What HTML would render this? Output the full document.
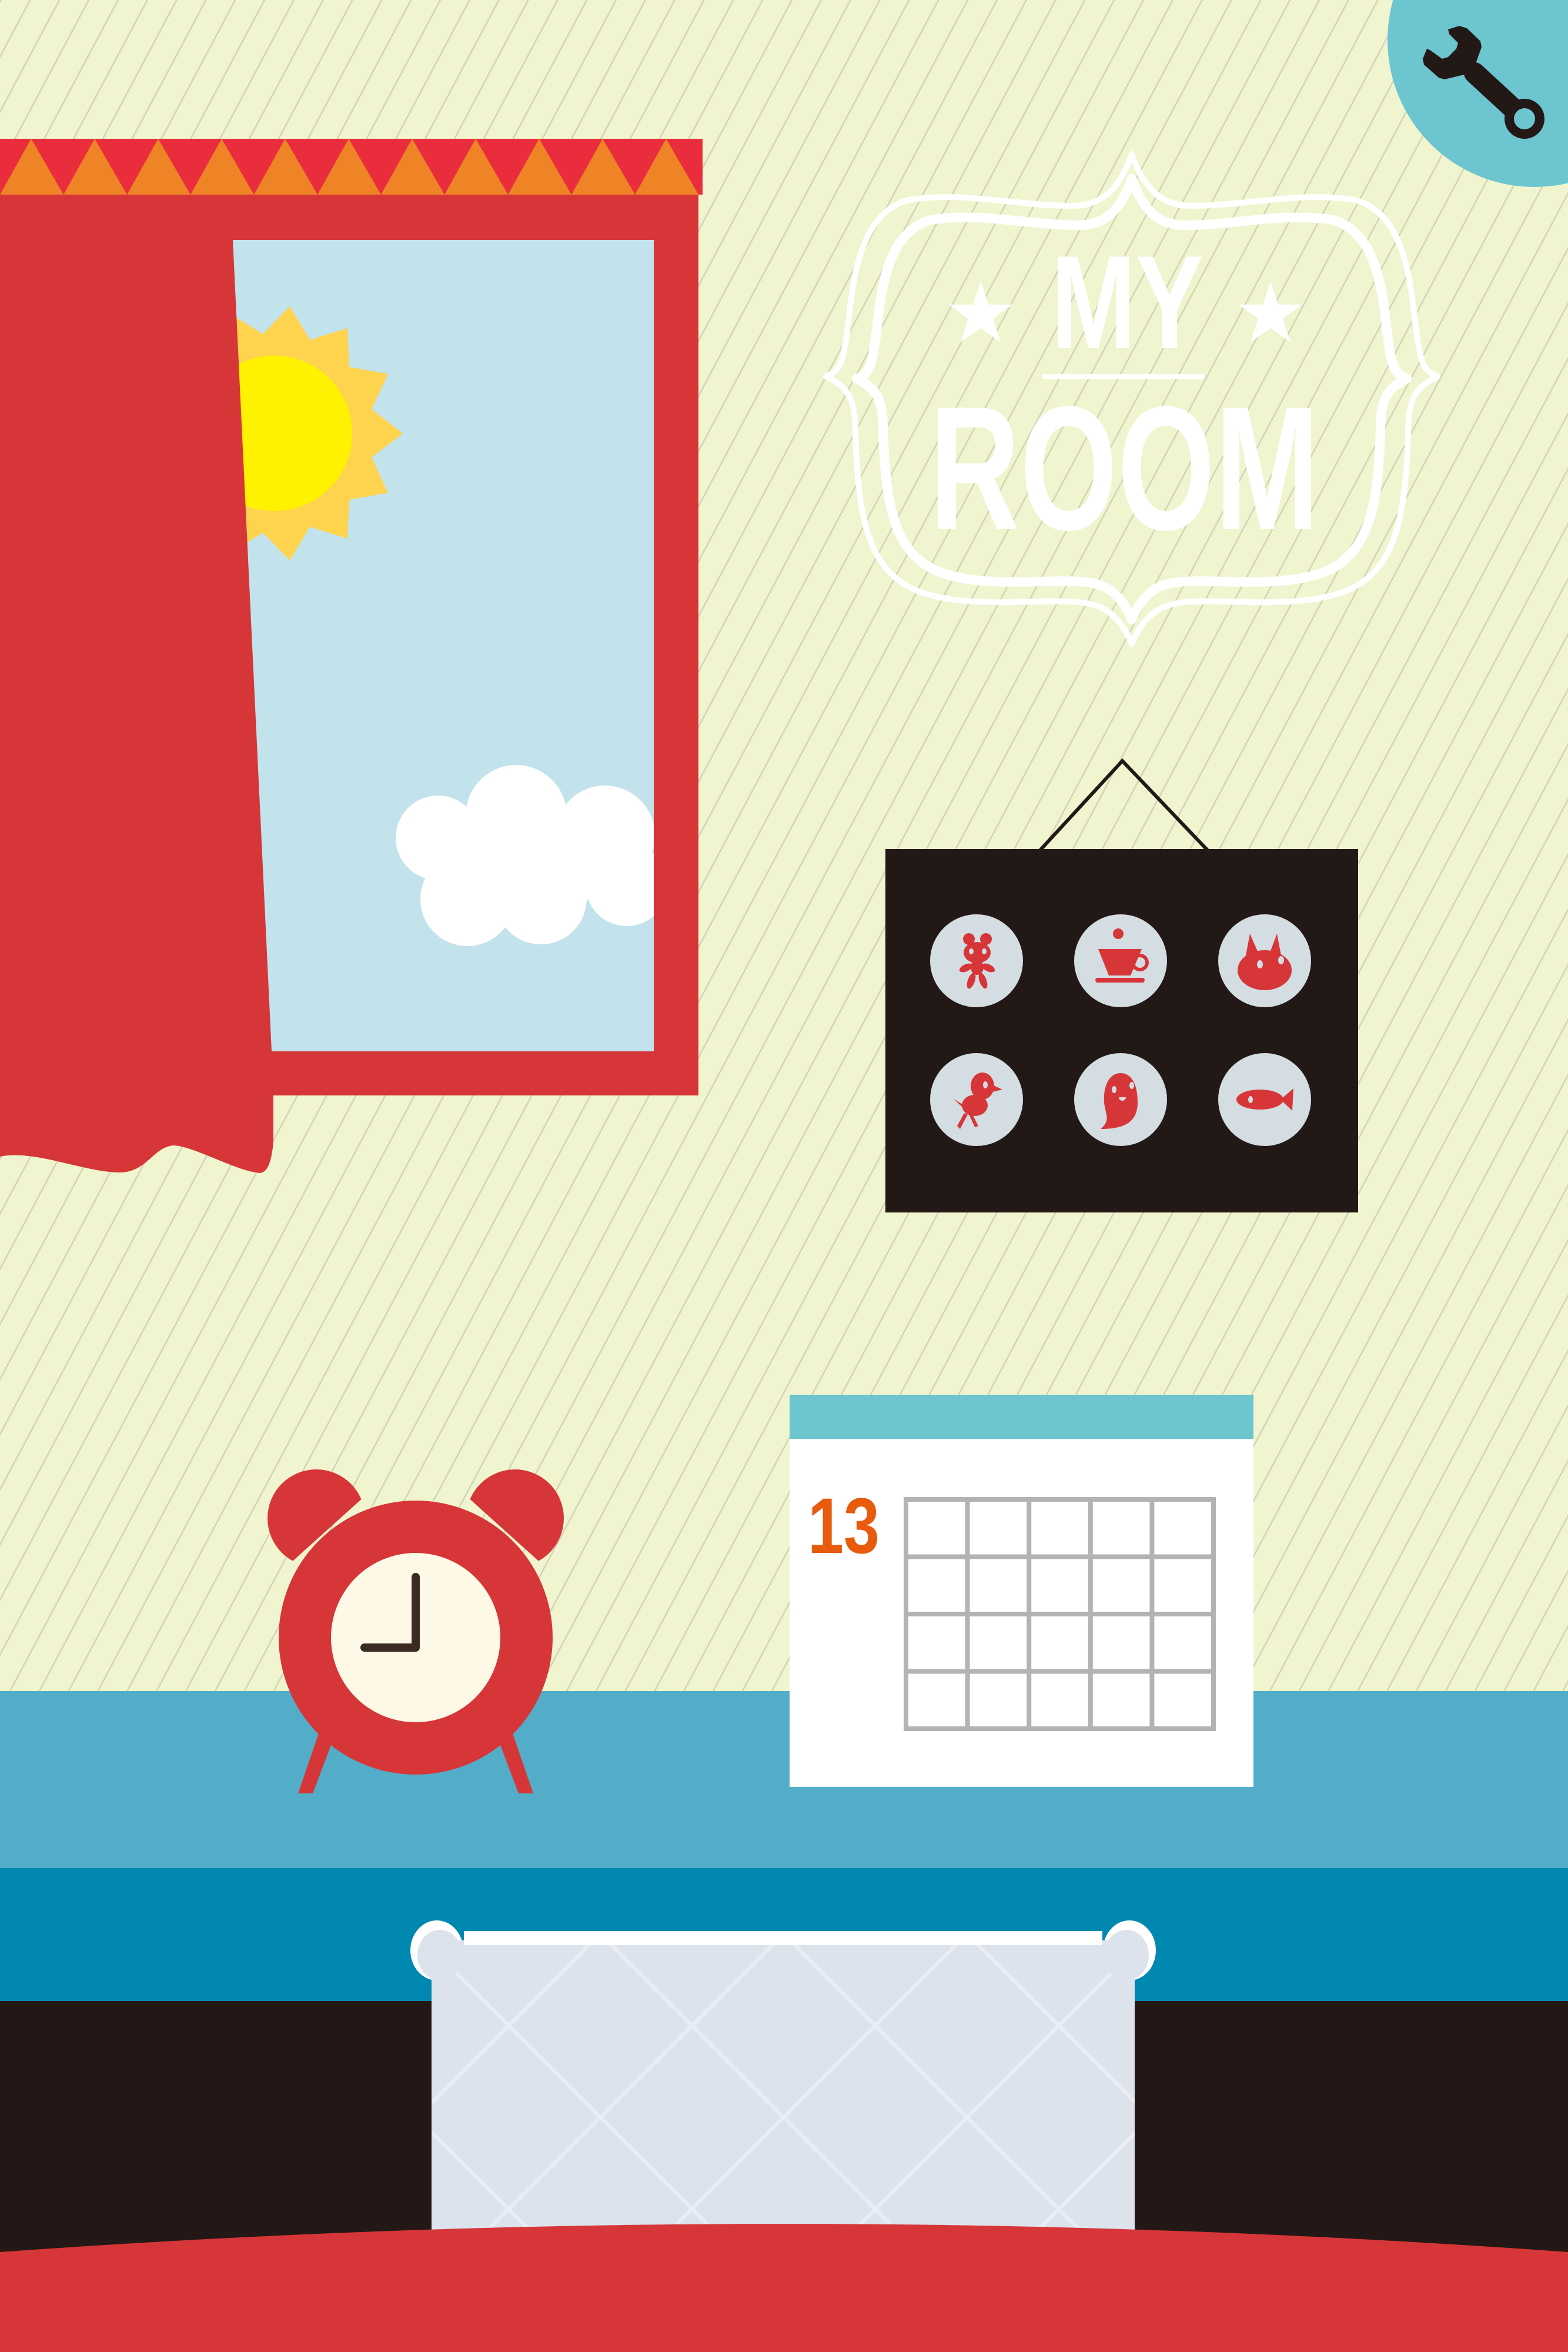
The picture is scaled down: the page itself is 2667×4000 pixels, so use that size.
<!DOCTYPE html>
<html><head><meta charset="utf-8"><style>
html,body{margin:0;padding:0;width:2667px;height:4000px;overflow:hidden;background:#f1f5cf}
svg{display:block}
</style></head><body>
<svg width="2667" height="4000" viewBox="0 0 2667 4000" xmlns="http://www.w3.org/2000/svg">
<defs>
<pattern id="str" patternUnits="userSpaceOnUse" width="44" height="100" patternTransform="rotate(28)">
<rect x="0" y="0" width="2.5" height="100" fill="#d2d3b6"/>
</pattern>
<pattern id="dia" patternUnits="userSpaceOnUse" x="241" y="13" width="312" height="312">
<path d="M0,0 L312,312 M0,312 L312,0" stroke="#e9edf5" stroke-width="6" fill="none"/>
</pattern>
<clipPath id="sky"><rect x="396" y="408" width="716" height="1380"/></clipPath>
<clipPath id="bl"><polygon points="300,2380 742,2380 742,2435 400,2743 300,2743"/></clipPath>
<clipPath id="br"><polygon points="1114,2380 672,2380 672,2435 1014,2743 1114,2743"/></clipPath>
</defs>
<rect width="2667" height="2876" fill="#f1f5cf"/>
<rect width="2667" height="2876" fill="url(#str)"/>

<circle cx="2610" cy="68" r="250" fill="#6dc5d0"/>
<line x1="2508" y1="124" x2="2586" y2="196" stroke="#221816" stroke-width="36" stroke-linecap="round"/>
<circle cx="2593" cy="202" r="34" fill="#221816"/>
<circle cx="2593" cy="202" r="18" fill="#6dc5d0"/>
<polygon fill="#221816" points="2463,50 2482,44 2495,48 2518,70 2520,80 2510,108 2490,127 2457,135 2447,132 2422,110 2420,100 2427,83 2432,85 2453,100 2463,97 2477,83 2480,73 2465,58"/>

<rect x="0" y="331" width="1188" height="1532" fill="#d63638"/>
<rect x="396" y="408" width="716" height="1380" fill="#c3e3ec"/>
<g clip-path="url(#sky)">
<polygon fill="#fed44f" points="685,737 632,778 660,838 594,850 591,916 527,896 493,953 447,906 390,941 370,877 304,882 316,816 255,789 297,737 255,685 316,658 304,592 370,597 390,533 447,568 493,521 527,578 591,558 594,624 660,636 632,696"/>
<circle cx="467" cy="737" r="132" fill="#fff200"/>
<g fill="#fff">
<circle cx="745" cy="1425" r="72"/>
<circle cx="878" cy="1387" r="86"/>
<circle cx="1029" cy="1421" r="85"/>
<circle cx="795" cy="1529" r="80"/>
<circle cx="920" cy="1528" r="78"/>
<circle cx="1066" cy="1505" r="70"/>
<rect x="760" y="1420" width="340" height="110"/>
</g>
</g>
<path fill="#d63638" d="M0,331 L396,331 L396,408 L462,1788 L465,1850 L465,1942 C462,1975 455,2000 436,1994 C400,1990 330,1950 296,1948 C260,1950 250,1995 202,1994 C140,1993 60,1955 0,1967 Z"/>
<rect x="0" y="236" width="1195" height="95" fill="#e92d3c"/>
<g fill="#ef8427">
<polygon points="0,331 53,236 108,331"/><polygon points="108,331 161,236 216,331"/><polygon points="216,331 269,236 324,331"/><polygon points="324,331 377,236 432,331"/><polygon points="432,331 485,236 540,331"/><polygon points="540,331 593,236 648,331"/><polygon points="648,331 701,236 756,331"/><polygon points="756,331 809,236 864,331"/><polygon points="864,331 917,236 972,331"/><polygon points="972,331 1025,236 1080,331"/><polygon points="1080,331 1133,236 1188,331"/>
</g>

<g fill="none" stroke="#fff" stroke-linejoin="round">
<path stroke-width="10" d="M1925,262 C1945,320 1975,350 2025,350 C2125,350 2205,325 2305,340 C2375,360 2395,440 2405,530 C2415,620 2420,630 2445,640 C2405,660 2395,680 2395,740 C2390,880 2375,980 2275,1010 C2175,1040 2045,1010 1985,1030 C1955,1040 1935,1070 1925,1095 C1915,1070 1895,1040 1865,1030 C1805,1010 1675,1040 1575,1010 C1475,980 1460,880 1455,740 C1455,680 1445,660 1405,640 C1430,630 1435,620 1445,530 C1455,440 1475,360 1545,340 C1645,325 1725,350 1825,350 C1875,350 1905,320 1925,262 Z"/>
<path stroke-width="18" transform="translate(1925,680) scale(0.9) translate(-1925,-680)" d="M1925,262 C1945,320 1975,350 2025,350 C2125,350 2205,325 2305,340 C2375,360 2395,440 2405,530 C2415,620 2420,630 2445,640 C2405,660 2395,680 2395,740 C2390,880 2375,980 2275,1010 C2175,1040 2045,1010 1985,1030 C1955,1040 1935,1070 1925,1095 C1915,1070 1895,1040 1865,1030 C1805,1010 1675,1040 1575,1010 C1475,980 1460,880 1455,740 C1455,680 1445,660 1405,640 C1430,630 1435,620 1445,530 C1455,440 1475,360 1545,340 C1645,325 1725,350 1825,350 C1875,350 1905,320 1925,262 Z"/>
</g>
<g fill="#fff" font-family="'Liberation Sans', sans-serif" font-weight="bold">
<text x="1788" y="592" font-size="226" textLength="259" lengthAdjust="spacingAndGlyphs">MY</text>
<text x="1581" y="900" font-size="300" textLength="663" lengthAdjust="spacingAndGlyphs">ROOM</text>
</g>
<rect x="1773" y="636" width="275" height="9" fill="#fff"/>
<polygon fill="#fff" points="1668,478 1681,518 1722,518 1689,542 1702,582 1668,558 1634,582 1647,542 1614,518 1655,518"/>
<polygon fill="#fff" points="2161,478 2174,518 2215,518 2182,542 2195,582 2161,558 2127,582 2140,542 2107,518 2148,518"/>

<polyline points="1769,1446 1909,1294 2054,1446" fill="none" stroke="#221816" stroke-width="6"/>
<rect x="1506" y="1444" width="804" height="618" fill="#221816"/>
<g fill="#d4dde2">
<circle cx="1661" cy="1634" r="79"/><circle cx="1906" cy="1634" r="79"/><circle cx="2151" cy="1634" r="79"/>
<circle cx="1661" cy="1870" r="79"/><circle cx="1906" cy="1870" r="79"/><circle cx="2151" cy="1870" r="79"/>
</g>
<g fill="#d63638">
<circle cx="1648" cy="1597" r="10"/><circle cx="1677" cy="1597" r="10"/>
<ellipse cx="1662" cy="1620" rx="23" ry="18"/>
<ellipse cx="1662" cy="1645" rx="11" ry="13"/>
<ellipse cx="1643" cy="1646" rx="12" ry="6" transform="rotate(-25 1643 1646)"/>
<ellipse cx="1681" cy="1646" rx="12" ry="6" transform="rotate(25 1681 1646)"/>
<ellipse cx="1652" cy="1668" rx="6" ry="14" transform="rotate(20 1652 1668)"/>
<ellipse cx="1672" cy="1668" rx="6" ry="14" transform="rotate(-20 1672 1668)"/>
<circle cx="1902" cy="1588" r="9"/>
<polygon points="1868,1614 1942,1614 1923,1659 1886,1659"/>
<circle cx="1939" cy="1637" r="12" fill="none" stroke="#d63638" stroke-width="6"/>
<rect x="1863" y="1663" width="84" height="8" rx="4"/>
<ellipse cx="2151" cy="1650" rx="46" ry="34"/>
<polygon points="2118,1630 2126,1588 2140,1620"/>
<polygon points="2160,1620 2172,1588 2180,1630"/>
<ellipse cx="1658" cy="1880" rx="22" ry="18"/>
<ellipse cx="1671" cy="1847" rx="20" ry="23"/>
<polygon points="1688,1845 1705,1853 1688,1857"/>
<polygon points="1622,1869 1640,1880 1650,1895"/>
<polygon points="1640,1893 1646,1895 1633,1920 1628,1915"/>
<polygon points="1648,1895 1654,1895 1664,1915 1658,1917"/>
<path d="M1906,1825 C1925,1825 1935,1845 1935,1875 C1935,1910 1910,1920 1872,1920 C1890,1905 1880,1895 1878,1875 C1876,1845 1888,1825 1906,1825 Z"/>
<ellipse cx="2143" cy="1870" rx="40" ry="17"/>
<polygon points="2178,1870 2200,1851 2198,1889"/>
</g>
<g fill="#d4dde2">
<ellipse cx="1652" cy="1618" rx="4" ry="5"/><ellipse cx="1674" cy="1618" rx="4" ry="5"/>
<ellipse cx="2143" cy="1640" rx="5" ry="7"/><ellipse cx="2179" cy="1633" rx="5" ry="7"/>
<ellipse cx="1676" cy="1845" rx="4" ry="6"/>
<ellipse cx="1895" cy="1853" rx="4" ry="6"/><ellipse cx="1925" cy="1846" rx="4" ry="6"/>
<path d="M1903,1866 h12 a6,6 0 0 1 -12,0 z"/>
<ellipse cx="2127" cy="1870" rx="4" ry="6"/>
</g>

<rect x="0" y="2876" width="2667" height="301" fill="#53adc9"/>
<rect x="0" y="3177" width="2667" height="226" fill="#0088b1"/>
<rect x="0" y="3403" width="2667" height="597" fill="#231816"/>

<polygon fill="#d63638" points="543,2945 566,2960 532,3050 507,3050"/>
<polygon fill="#d63638" points="871,2945 848,2960 882,3050 907,3050"/>
<circle cx="538" cy="2582" r="83" fill="#d63638" clip-path="url(#bl)"/>
<circle cx="876" cy="2582" r="83" fill="#d63638" clip-path="url(#br)"/>
<circle cx="707" cy="2785" r="233" fill="#d63638"/>
<circle cx="707" cy="2785" r="144" fill="#fef9e6"/>
<path d="M707,2682 L707,2802 L620,2802" fill="none" stroke="#3a2a22" stroke-width="14" stroke-linecap="round" stroke-linejoin="round"/>

<rect x="1343" y="2372" width="789" height="667" fill="#fff"/>
<rect x="1343" y="2372" width="789" height="75" fill="#6dc5d0"/>
<g fill="none" stroke="#b3b3b3" stroke-width="8">
<rect x="1541" y="2550" width="523" height="390"/>
<path d="M1645.6,2550 V2940 M1750.2,2550 V2940 M1854.8,2550 V2940 M1959.4,2550 V2940 M1541,2647.5 H2064 M1541,2745 H2064 M1541,2842.5 H2064"/>
</g>
<text x="1374" y="2641" font-family="'Liberation Sans', sans-serif" font-weight="bold" font-size="134" fill="#e85a0c" textLength="122" lengthAdjust="spacingAndGlyphs">13</text>

<ellipse cx="743" cy="3317" rx="45" ry="51" fill="#fff"/>
<ellipse cx="1921" cy="3317" rx="45" ry="51" fill="#fff"/>
<rect x="734" y="3300" width="1196" height="500" fill="#dde3ed"/>
<rect x="734" y="3300" width="1196" height="500" fill="url(#dia)"/>
<ellipse cx="748" cy="3325" rx="38" ry="43" fill="#dde3ed"/>
<ellipse cx="1916" cy="3325" rx="38" ry="43" fill="#dde3ed"/>
<rect x="789" y="3284" width="1086" height="24" fill="#fff"/>

<path d="M0,3830 Q1333,3734 2667,3830 L2667,4000 L0,4000 Z" fill="#d63638"/>
</svg>
</body></html>
